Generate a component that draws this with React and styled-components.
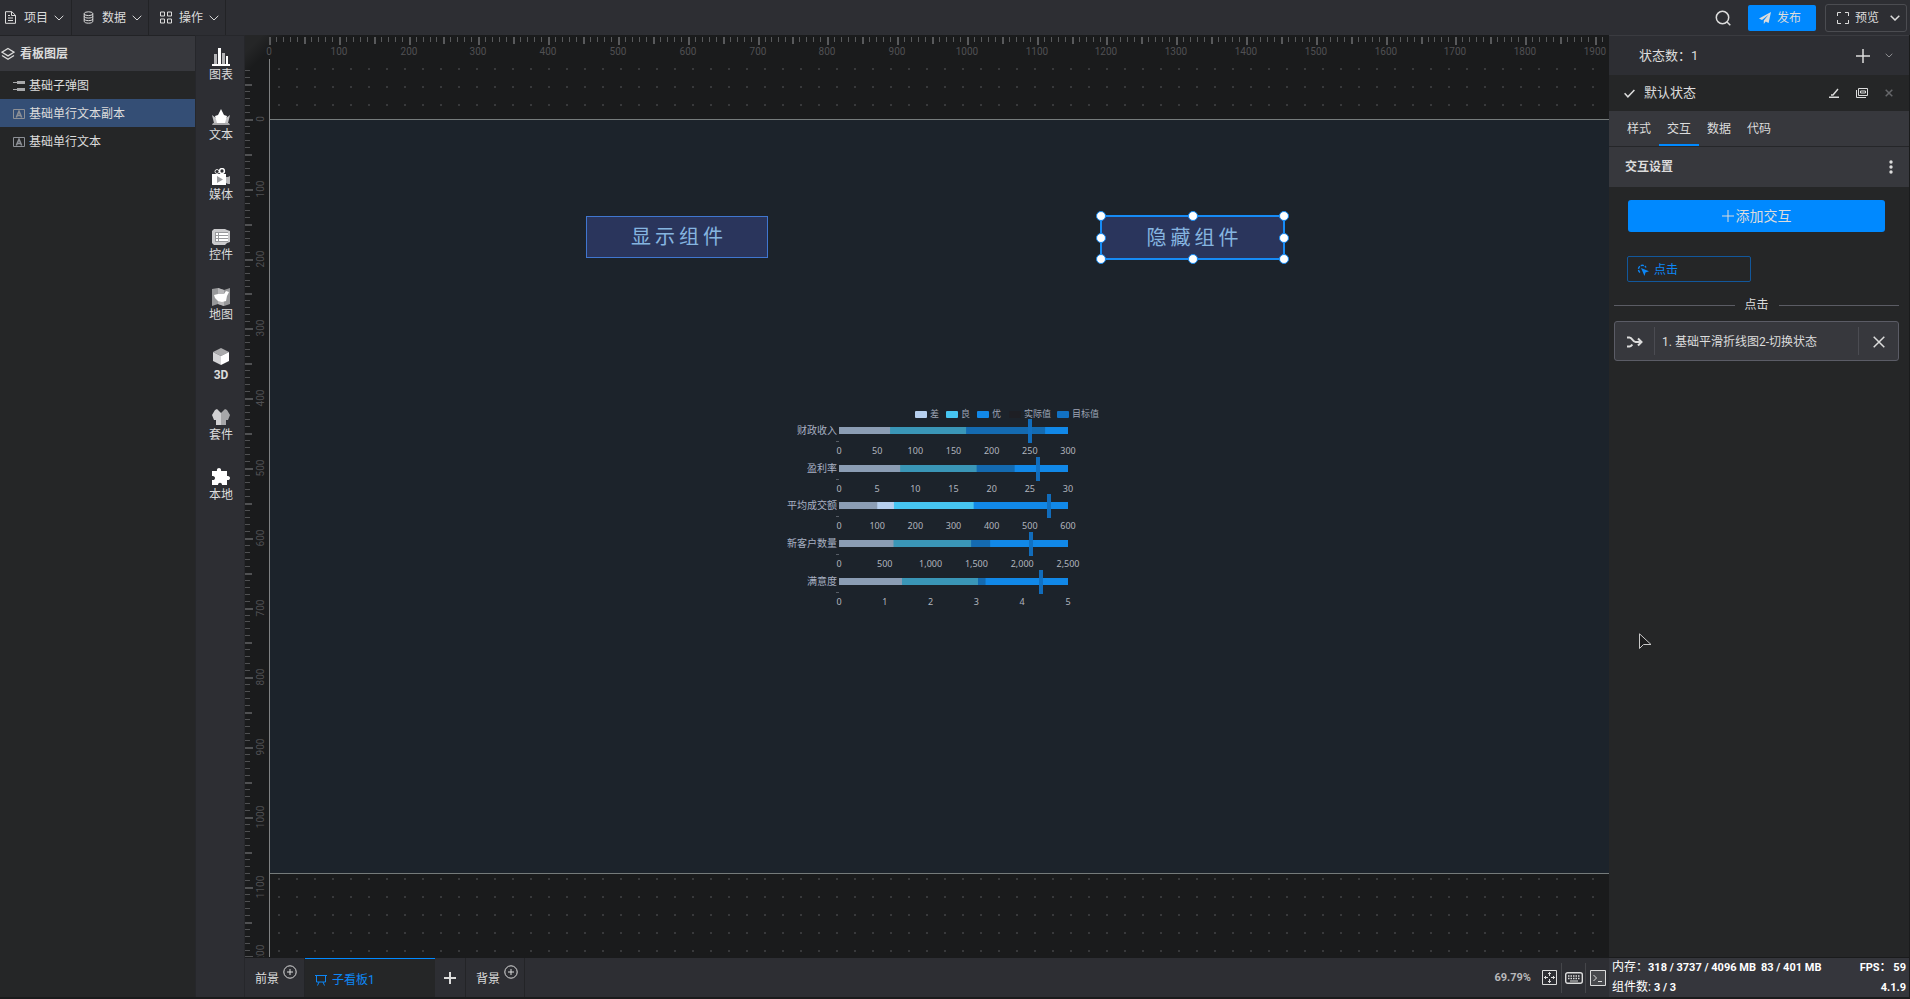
import React, { useLayoutEffect, useRef, useState } from "react";
import styled, { createGlobalStyle } from "styled-components";

const GlobalStyle = createGlobalStyle`
  * {
    box-sizing: border-box;
  }

  body {
    margin: 0;
    background: #1a1b1c;
    color: #dcdcdc;
    font: 12px/16px Roboto, "Noto Sans CJK SC", sans-serif;
  }

  button {
    padding: 0;
    border: 0;
    background: none;
    color: inherit;
    font: inherit;
    cursor: pointer;
  }

  svg {
    display: block;
    flex-shrink: 0;
  }
`;

const Page = styled.div`
  display: flex;
  flex-direction: column;
  height: 100vh;
  padding-bottom: 2px;
`;

const Body = styled.div`
  display: flex;
  flex: 1;
  min-height: 0;
`;

/* ---------- top bar ---------- */

const TopBar = styled.header`
  display: flex;
  align-items: center;
  height: 35px;
  padding-right: 3px;
  background: #2d2e33;
`;

const MenuButton = styled.button`
  display: flex;
  align-items: center;
  height: 35px;
  padding: 0 ${(props) => (props.$first ? 7 : 6)}px 0
    ${(props) => (props.$first ? 4 : 10)}px;
  border-right: 1px solid #222326;

  svg:last-child {
    margin-left: 6px;
  }
`;

const MenuLabel = styled.span`
  margin-left: 7px;
`;

const TopActions = styled.div`
  display: flex;
  align-items: center;
  margin-left: auto;
`;

const SearchButton = styled.button`
  margin-right: 17px;
`;

const PublishButton = styled.button`
  display: flex;
  align-items: center;
  justify-content: center;
  gap: 6px;
  width: 68px;
  height: 26px;
  margin-right: 9px;
  padding-right: 4px;
  border-radius: 2px;
  background: #0089ff;
`;

const PreviewButton = styled.button`
  display: flex;
  align-items: center;
  gap: 6px;
  width: 82px;
  height: 28px;
  padding: 0 6px 0 11px;
  border: 1px solid #4b4c51;
  border-radius: 3px;

  svg:last-child {
    margin-left: auto;
  }
`;

/* ---------- layers ---------- */

const LayerPanel = styled.aside`
  width: 195px;
  background: #252627;
`;

const LayerTitle = styled.h2`
  display: flex;
  align-items: center;
  gap: 5px;
  height: 36px;
  margin: 0;
  padding-left: 1px;
  border-top: 1px solid #222326;
  background: #37383d;
  font-size: 12px;
  font-weight: 700;
`;

const LayerList = styled.ul`
  margin: 0;
  padding: 0;
  list-style: none;
`;

const LayerButton = styled.button`
  display: flex;
  align-items: center;
  gap: 4px;
  width: 100%;
  height: 28px;
  padding: 2px 0 0 13px;
  background: ${(props) => (props.$selected ? "#344e75" : "none")};
`;

/* ---------- component rail ---------- */

const Rail = styled.nav`
  display: flex;
  flex-direction: column;
  align-items: center;
  width: 50px;
  padding: 12px 0 0 2px;
  border: 1px solid #26272b;
  border-bottom: 0;
  background: #2d2e33;
`;

const RailButton = styled.button`
  display: flex;
  flex-direction: column;
  align-items: center;
  gap: 1px;
  height: 60px;
  font-weight: ${(props) => (props.$bold ? 700 : 400)};
`;

/* ---------- workspace ---------- */

const Workspace = styled.main`
  display: flex;
  flex: 1;
  flex-direction: column;
  min-width: 0;
`;

const Stage = styled.div`
  display: grid;
  flex: 1;
  grid-template-rows: 24px minmax(0, 1fr);
  grid-template-columns: 24px minmax(0, 1fr);
  min-height: 0;
  background: linear-gradient(135deg, #252627 12px, #1a1b1c 28px);
`;

const RulerTop = styled.svg`
  grid-column: 1 / 3;
  width: 100%;
  height: 24px;
`;

const RulerLeft = styled.svg`
  width: 24px;
  height: 100%;
`;

const Desk = styled.div`
  display: flex;
  padding: 60px 0 83px;
  border-left: 1px solid #7f8182;
  background-image: conic-gradient(
    at 2px 2px,
    transparent 270deg,
    #38393b 270deg
  );
  background-position: 8px 9px;
  background-size: 18px 18px;
`;

const Artboard = styled.div`
  position: relative;
  flex: 1;
  border: solid #757b7b;
  border-width: 1px 0;
  background: #1c232b;
`;

const TextNode = styled.div`
  position: absolute;
  top: ${(props) => props.$y}px;
  left: ${(props) => props.$x}px;
  display: flex;
  align-items: center;
  justify-content: center;
  width: ${(props) => (props.$selected ? 185 : 182)}px;
  height: ${(props) => (props.$selected ? 45 : 42)}px;
  padding-left: 4px;
  border: ${(props) => (props.$selected ? "2px solid #168bf5" : "1px solid #4076cf")};
  background: #2a355c;
  color: #86b5e0;
  font-size: 20px;
  line-height: 28px;
  letter-spacing: 4px;
`;

const HandleFrame = styled.div`
  position: absolute;
  inset: -1px;
`;

const Handle = styled.i`
  position: absolute;
  top: ${(props) => props.$top};
  left: ${(props) => props.$left};
  width: 10px;
  height: 10px;
  margin: -5px;
  border: 1px solid #168bf5;
  border-radius: 50%;
  background: #fff;
`;

const ChartNode = styled.svg`
  position: absolute;
  top: 285px;
  left: 510px;
  font-family: "Noto Sans", "Noto Sans CJK SC", sans-serif;
`;

/* ---------- board tabs ---------- */

const BoardBar = styled.footer`
  display: flex;
  height: 40px;
  border-top: 1px solid #1a1b1c;
  background: #2d2e33;
`;

const BoardTab = styled.button`
  display: flex;
  align-items: center;
  gap: 4px;
  width: ${(props) => props.$width}px;
  padding: 3px 0 0 10px;
  border-right: 1px solid #232427;

  svg {
    align-self: flex-start;
    margin-top: 4px;
  }
`;

const ActiveBoardTab = styled.button`
  display: flex;
  align-items: center;
  gap: 5px;
  width: 130px;
  padding: 4px 0 0 10px;
  border-top: 1px solid #0089ff;
  background: #252627;
  color: #0d86f5;
`;

const AddBoard = styled.button`
  display: flex;
  align-items: center;
  justify-content: center;
  width: 31px;
  border-right: 1px solid #232427;
`;

const ViewTools = styled.div`
  display: flex;
  align-items: center;
  margin-left: auto;
`;

const Zoom = styled.span`
  margin-right: 6px;
  color: #b8b8ba;
  font-size: 11px;
  font-weight: 700;
`;

const ViewButton = styled.button`
  display: flex;
  align-items: center;
  justify-content: center;
  width: ${(props) => props.$width}px;
  height: 30px;
  border-right: ${(props) => (props.$last ? 0 : 1)}px solid #45464a;
`;

/* ---------- inspector ---------- */

const Inspector = styled.aside`
  position: relative;
  display: flex;
  flex-direction: column;
  width: 301px;
  border-right: 1px solid #1a1b1c;
  background: #252627;
`;

const StateHeader = styled.div`
  display: flex;
  align-items: center;
  height: 40px;
  padding: 0 16px 0 30px;
  border-top: 1px solid #3a3b40;
  background: #2d2e33;
  font-size: 13px;
`;

const StateRow = styled.div`
  display: flex;
  align-items: center;
  gap: 9px;
  height: 36px;
  padding: 0 16px 0 15px;
  font-size: 13px;
`;

const RowActions = styled.div`
  display: flex;
  align-items: center;
  gap: ${(props) => props.$gap}px;
  margin-left: auto;
`;

const Tabs = styled.div`
  display: flex;
  height: 36px;
  padding-left: 10px;
  border-bottom: 1px solid #252629;
  background: #37383d;
`;

const Tab = styled.button`
  width: 40px;
  border: solid transparent;
  border-width: 2px 0;
  border-bottom-color: ${(props) => (props.$active ? "#0089ff" : "transparent")};
`;

const SectionTitle = styled.h3`
  display: flex;
  align-items: center;
  justify-content: space-between;
  height: 40px;
  margin: 0;
  padding: 0 16px;
  background: #37383d;
  font-size: 12px;
  font-weight: 700;
`;

const AddButton = styled.button`
  display: flex;
  align-items: center;
  justify-content: center;
  gap: 2px;
  height: 32px;
  margin: 13px 24px 0 19px;
  border-radius: 3px;
  background: #0089ff;
  font-size: 14px;
`;

const EventButton = styled.button`
  display: flex;
  align-items: center;
  gap: 5px;
  width: 124px;
  height: 26px;
  margin: 24px 0 0 18px;
  padding: 2px 0 0 9px;
  border: 1px solid #12579b;
  border-radius: 2px;
  color: #0d86f5;
`;

const EventDivider = styled.div`
  display: flex;
  align-items: center;
  gap: 10px;
  margin: 15px 10px 0 5px;

  &::before,
  &::after {
    flex: 1;
    height: 1px;
    background: #5b5c64;
    content: "";
  }
`;

const ActionCard = styled.div`
  display: flex;
  align-items: center;
  height: 40px;
  margin: 8px 10px 0 5px;
  border: 1px solid #5b5c66;
  border-radius: 3px;
  background: #37383d;
`;

const ActionIcon = styled.span`
  display: flex;
  align-items: center;
  justify-content: center;
  width: 40px;
  height: 28px;
  padding-top: 2px;
  border-right: 1px solid #4b4c52;
`;

const ActionName = styled.span`
  flex: 1;
  padding: 2px 0 0 7px;
`;

const RemoveButton = styled.button`
  display: flex;
  align-items: center;
  justify-content: center;
  width: 40px;
  height: 28px;
  padding-top: 2px;
  border-left: 1px solid #4b4c52;
`;

const Stats = styled.div`
  display: flex;
  flex-direction: column;
  justify-content: space-between;
  height: 40px;
  margin-top: auto;
  padding: 0 3px 0;
  border-top: 1px solid #1a1b1c;
  background: #35363c;
  color: #fff;

  b {
    font-size: 11px;
  }
`;

const StatLine = styled.div`
  display: flex;
  line-height: 19px;

  b + b {
    margin-left: 5px;
  }

  b:last-child {
    margin-left: auto;
  }
`;

const Pointer = styled.svg`
  position: absolute;
  top: 598px;
  left: 30px;
`;

/* ---------- icons ---------- */

const Icon = ({ size = 12, w, h, children, ...rest }) => (
  <svg
    width={w || size}
    height={h || size}
    viewBox={`0 0 ${w || size} ${h || size}`}
    fill="none"
    stroke="currentColor"
    aria-hidden="true"
    {...rest}>
    {children}
  </svg>
);

const Chevron = ({ w = 10, h = 6, ...rest }) => (
  <Icon w={w} h={h} {...rest}>
    <path d={`M.7.8 L${w / 2} ${h - 1} L${w - 0.7} .8`} />
  </Icon>
);

const Plus = ({ size, width = 1 }) => (
  <Icon size={size} strokeWidth={width}>
    <path d={`M${size / 2} 0V${size}M0 ${size / 2}H${size}`} />
  </Icon>
);

const Cross = ({ size, ...rest }) => (
  <Icon size={size} {...rest}>
    <path d={`M.7.7L${size - 0.7} ${size - 0.7}M${size - 0.7}.7L.7 ${size - 0.7}`} />
  </Icon>
);

const PlusCircle = () => (
  <Icon size={14}>
    <circle cx="7" cy="7" r="6.2" />
    <path d="M7 4v6M4 7h6" />
  </Icon>
);

const TextIcon = () => (
  <Icon w={12} h={10} color="#8d9096">
    <path d="M.5.5h11v9H.5z" />
    <path d="M3.300 8.500L6 2.300l2.700 6.200M4.200 6.500h3.600" strokeWidth="1.600" />
  </Icon>
);

const BulletIcon = () => (
  <Icon w={12} h={12} stroke="none" fill="#a8a9ab">
    <path d="M0 2h4v1H0zM4 1h8v3H4zM0 9h4v1H0zM4 8h8v3H4z" />
  </Icon>
);

const menus = [
  {
    label: "项目",
    icon: (
      <Icon size={13}>
        <path d="M1.500.7h6.300l3.700 3.600v8H1.500zM7.500.7v3.800h4M4 4.500h2M4 7h5M4 9.500h5" />
      </Icon>
    ),
  },
  {
    label: "数据",
    icon: (
      <Icon size={13}>
        <ellipse cx="6.500" cy="2.700" rx="4.300" ry="1.900" />
        <path d="M2.200 2.700v7.600c0 2.500 8.600 2.500 8.600 0V2.700M2.200 5.300c0 2.300 8.600 2.300 8.600 0M2.200 7.900c0 2.300 8.600 2.300 8.600 0" />
      </Icon>
    ),
  },
  {
    label: "操作",
    icon: (
      <Icon size={13}>
        <path d="M1.500 1h4v4h-4zM8.500 1h4v4h-4zM1.500 8h4v4h-4zM8.500 8h4v4h-4z" />
      </Icon>
    ),
  },
];

const layers = [
  { name: "基础子弹图", icon: <BulletIcon /> },
  { name: "基础单行文本副本", icon: <TextIcon />, selected: true },
  { name: "基础单行文本", icon: <TextIcon /> },
];

const tools = [
  {
    label: "图表",
    icon: (
      <>
        <path fill="#b4b4b6" d="M2 6h3v10H2zM10 5h3v11h-3z" />
        <path d="M6 0h3v16H6zM14 8h2v8h-2zM0 16h18v2H0z" />
      </>
    ),
  },
  {
    label: "文本",
    icon: (
      <>
        <path fill="#c4c4c6" d="M0 7l4 3 2 5H2zM18 7l-4 3-2 5h4z" />
        <path d="M9 1l3 6 3 1-2 7H5L3 8l3-1z" />
        <path fill="#a6a6a8" d="M1 15h16l1 2H0z" />
      </>
    ),
  },
  {
    label: "媒体",
    icon: (
      <>
        <circle cx="5" cy="3.500" r="2" fill="none" stroke="#ddd" />
        <circle cx="10" cy="3" r="2.400" fill="none" stroke="#fff" strokeWidth="1.500" />
        <path fill="#b9b9bb" d="M14 9h2l2-1v8h-2l-2-1z" />
        <path d="M0 6h14v11H0z" />
        <path fill="#9c9da0" d="M5 8l6 3.500L5 15z" />
      </>
    ),
  },
  {
    label: "控件",
    icon: (
      <>
        <path fill="#cbcbcd" d="M2 1h11l2 1 3 1v11l-3 1-2 2H2l-2-2V3z" />
        <path fill="#999a9d" d="M3 4h13v10H3z" />
        <path d="M4 5h2v2H4zM7 5h9v2H7zM4 8h2v2H4zM7 8h9v2H7zM4 11h2v2H4zM7 11h9v2H7z" />
      </>
    ),
  },
  {
    label: "地图",
    icon: (
      <>
        <path fill="#97989a" d="M0 1l6-1 6 2 6-2v16l-6 2-6-2-6 2z" />
        <path fill="#b8b8ba" d="M6 0l6 2v16l-6-2z" />
        <path d="M2 7l4-1 6 0 2-3 3 1-2 4-1 5-4 1-4-1-3-3z" />
      </>
    ),
  },
  {
    label: "3D",
    bold: true,
    icon: (
      <>
        <path fill="#a9a9ab" d="M9 0l8 4-8 4-8-4z" />
        <path fill="#d4d4d6" d="M1 4l8 4v9l-8-4z" />
        <path d="M17 4L9 8v9l8-4z" />
      </>
    ),
  },
  {
    label: "套件",
    icon: (
      <>
        <path fill="#d0d0d2" d="M5 1l4 4v12H4v-5H2L0 7l3-5z" />
        <path fill="#a6a6a8" d="M13 1L9 5v12h5v-5h2l2-5-3-5z" />
      </>
    ),
  },
  {
    label: "本地",
    icon: (
      <path d="M0 3h5c-1-4 5-4 4 0h6v5c4-1 4 5 0 4v5h-5c0-3-4-3-4 0H0v-5c4 1 4-5 0-4z" />
    ),
  },
];

/* ---------- rulers ---------- */

const STEP = 6.979;
const range = (from, to) =>
  Array.from({ length: Math.max(0, to - from + 1) }, (_, i) => from + i);
const tickLength = (n) => (n % 10 === 0 ? 8 : n % 5 === 0 ? 7 : 5);

// draws only the ticks that fit the ruler's current size
const useLength = (side) => {
  const ref = useRef(null);
  const [length, setLength] = useState(0);
  useLayoutEffect(() => {
    const measure = () => setLength(ref.current.getBoundingClientRect()[side]);
    measure();
    window.addEventListener("resize", measure);
    return () => window.removeEventListener("resize", measure);
  }, [side]);
  return [ref, length];
};

const HorizontalRuler = () => {
  const [ref, length] = useLength("width");
  return (
    <RulerTop ref={ref} fontSize="10" fill="#505053" textAnchor="middle">
      {range(0, Math.floor((length - 24) / STEP)).map((n) => {
        const x = Math.round(24 + n * STEP);
        return (
          <g key={n}>
            <rect x={x} y="2" width={n % 5 === 0 ? 2 : 1} height={tickLength(n)} fill="#58595b" />
            {n % 10 === 0 && (
              <text x={x} y="20">
                {n * 10}
              </text>
            )}
          </g>
        );
      })}
    </RulerTop>
  );
};

const VerticalRuler = () => {
  const [ref, length] = useLength("height");
  return (
    <RulerLeft ref={ref} fontSize="10" fill="#505053" textAnchor="middle">
      {range(-7, Math.floor((length - 60) / STEP)).map((n) => {
        const y = Math.round(60 + n * STEP);
        return (
          <g key={n}>
            <rect y={y} width={tickLength(n)} height={n % 5 === 0 ? 2 : 1} fill="#505153" />
            {n % 10 === 0 && (
              <text transform={`translate(19 ${y}) rotate(-90)`}>{n * 10}</text>
            )}
          </g>
        );
      })}
    </RulerLeft>
  );
};

/* ---------- bullet chart ---------- */

const POOR = "#b6cfee";
const GOOD = "#46c5f1";
const BEST = "#1188e8";
const TARGET = "#1171c3";
const AXIS_X = 59;
const AXIS_W = 229;

const bullets = [
  { name: "财政收入", poor: 0.223, good: 0.555, actual: 0.9, target: 0.833, ticks: ["0", "50", "100", "150", "200", "250", "300"] },
  { name: "盈利率", poor: 0.267, good: 0.601, actual: 0.767, target: 0.867, ticks: ["0", "5", "10", "15", "20", "25", "30"] },
  { name: "平均成交额", poor: 0.24, good: 0.588, actual: 0.167, target: 0.917, ticks: ["0", "100", "200", "300", "400", "500", "600"] },
  { name: "新客户数量", poor: 0.238, good: 0.577, actual: 0.66, target: 0.84, ticks: ["0", "500", "1,000", "1,500", "2,000", "2,500"] },
  { name: "满意度", poor: 0.275, good: 0.607, actual: 0.64, target: 0.88, ticks: ["0", "1", "2", "3", "4", "5"] },
];

const legend = [
  { name: "差", color: POOR, x: 135 },
  { name: "良", color: GOOD, x: 166 },
  { name: "优", color: BEST, x: 197 },
  { name: "实际值", color: "#1e1f24", x: 229 },
  { name: "目标值", color: TARGET, x: 277 },
];

const BulletChart = () => (
  <ChartNode width="330" height="206">
    {legend.map((item) => (
      <g key={item.name}>
        <rect x={item.x} y="6" width="12" height="7" rx="1" fill={item.color} />
        <text x={item.x + 15} y="12" fontSize="9" fill="#9fa6b6">
          {item.name}
        </text>
      </g>
    ))}
    {bullets.map((row, i) => {
      const y = Math.round(22 + i * 37.7);
      return (
        <g key={row.name}>
          <text x="57" y={y + 7} fontSize="10" fill="#a8b1c3" textAnchor="end">
            {row.name}
          </text>
          <rect x={AXIS_X} y={y} width={AXIS_W} height="7" fill={BEST} />
          <rect x={AXIS_X} y={y} width={AXIS_W * row.good} height="7" fill={GOOD} />
          <rect x={AXIS_X} y={y} width={AXIS_W * row.poor} height="7" fill={POOR} />
          <rect x={AXIS_X} y={y} width={AXIS_W * row.actual} height="7" fill="#1e1e22" opacity="0.28" />
          <rect x={Math.round(AXIS_X + AXIS_W * row.target) - 2} y={y - 8} width="4" height="24" fill={TARGET} opacity="0.95" />
          <path d={`M56 ${y + 14.5}h3`} stroke="#575d66" />
          {row.ticks.map((tick, n) => (
            <text
              key={tick}
              x={AXIS_X + (AXIS_W * n) / (row.ticks.length - 1)}
              y={y + 27}
              fontSize="9"
              fill="#b1b5be"
              textAnchor="middle">
              {tick}
            </text>
          ))}
        </g>
      );
    })}
  </ChartNode>
);

const handles = [
  ["0%", "0%"],
  ["0%", "50%"],
  ["0%", "100%"],
  ["50%", "0%"],
  ["50%", "100%"],
  ["100%", "0%"],
  ["100%", "50%"],
  ["100%", "100%"],
];

const App = () => {
  return (
    <Page>
      <GlobalStyle />
      <TopBar>
        {menus.map((menu, i) => (
          <MenuButton key={menu.label} $first={i === 0}>
            {menu.icon}
            <MenuLabel>{menu.label}</MenuLabel>
            <Chevron />
          </MenuButton>
        ))}
        <TopActions>
          <SearchButton aria-label="搜索">
            <Icon size={16} strokeWidth="1.5">
              <circle cx="7.5" cy="7.5" r="6.2" />
              <path d="M12 12l3.300 3.300" />
            </Icon>
          </SearchButton>
          <PublishButton>
            <Icon size={12} stroke="none" fill="currentColor">
              <path d="M12 0L0 6.500l3 1.400L9.500 2.800 4.800 8.600V12l1.900-2.400 2.900 1.300z" />
            </Icon>
            发布
          </PublishButton>
          <PreviewButton>
            <Icon size={12}>
              <path d="M.5 4V.5H4M8 .5h3.500V4M11.500 8v3.500H8M4 11.500H.5V8" />
            </Icon>
            预览
            <Chevron strokeWidth="1.5" />
          </PreviewButton>
        </TopActions>
      </TopBar>

      <Body>
        <LayerPanel>
          <LayerTitle>
            <Icon size={14} strokeWidth="1.3">
              <path d="M7 1.500l6 3.700-6 3.700-6-3.700zM1 8.500l6 3.700 6-3.700" />
            </Icon>
            看板图层
          </LayerTitle>
          <LayerList>
            {layers.map((layer) => (
              <li key={layer.name}>
                <LayerButton $selected={layer.selected}>
                  {layer.icon}
                  {layer.name}
                </LayerButton>
              </li>
            ))}
          </LayerList>
        </LayerPanel>

        <Rail>
          {tools.map((tool) => (
            <RailButton key={tool.label} $bold={tool.bold}>
              <Icon size={18} stroke="none" fill="#fff">
                {tool.icon}
              </Icon>
              {tool.label}
            </RailButton>
          ))}
        </Rail>

        <Workspace>
          <Stage>
            <HorizontalRuler />
            <VerticalRuler />
            <Desk>
              <Artboard>
                <TextNode $x={316} $y={96}>
                  显示组件
                </TextNode>
                <TextNode $x={830} $y={95} $selected>
                  隐藏组件
                  <HandleFrame>
                    {handles.map(([top, left]) => (
                      <Handle key={top + left} $top={top} $left={left} />
                    ))}
                  </HandleFrame>
                </TextNode>
                <BulletChart />
              </Artboard>
            </Desk>
          </Stage>
          <BoardBar>
            <BoardTab $width={60}>
              前景
              <PlusCircle />
            </BoardTab>
            <ActiveBoardTab>
              <Icon size={12}>
                <path d="M0 1.500h12M1.500 1.500v6.500h9V1.500M4 8l-1.500 3.500M8 8l1.500 3.500" />
              </Icon>
              子看板1
            </ActiveBoardTab>
            <AddBoard aria-label="新建看板">
              <Plus size={12} width={2} />
            </AddBoard>
            <BoardTab $width={59}>
              背景
              <PlusCircle />
            </BoardTab>
            <ViewTools>
              <Zoom>69.79%</Zoom>
              <ViewButton $width={25} aria-label="适应画布">
                <Icon size={15}>
                  <path d="M.5.500h14v14H.5z" />
                  <path d="M7.500 2v4M7.500 9v4M2 7.500h4M9 7.500h4M6 3.500h3M6 11.500h3M3.500 6v3M11.500 6v3" />
                </Icon>
              </ViewButton>
              <ViewButton $width={24} aria-label="快捷键">
                <Icon w={18} h={12}>
                  <rect x=".7" y=".7" width="16.6" height="10.6" rx="2" strokeWidth="1.4" />
                  <path d="M3 4h12M3 6.500h12" strokeDasharray="1.5 1" strokeWidth="1.5" />
                  <path d="M5 9h8" />
                </Icon>
              </ViewButton>
              <ViewButton $width={23} $last aria-label="控制台">
                <Icon size={16}>
                  <path d="M.5.500h15v15H.5z" fill="#48494d" />
                  <path d="M3.500 5l3 3-3 3M8 11.500h4" />
                </Icon>
              </ViewButton>
            </ViewTools>
          </BoardBar>
        </Workspace>

        <Inspector>
          <StateHeader>
            状态数：1
            <RowActions $gap={15}>
              <button aria-label="添加状态">
                <Plus size={14} width={1.5} />
              </button>
              <button aria-label="展开">
                <Chevron w={8} h={5} color="#8f9093" />
              </button>
            </RowActions>
          </StateHeader>
          <StateRow>
            <Icon w={11} h={9} strokeWidth="1.5">
              <path d="M.6 4.300l3.300 3.500L10.400 1" />
            </Icon>
            默认状态
            <RowActions $gap={17}>
              <button aria-label="重命名">
                <Icon size={10} strokeWidth="1.4">
                  <path d="M0 9.300h10M2 7h2L9 1" />
                </Icon>
              </button>
              <button aria-label="复制">
                <Icon w={12} h={10}>
                  <path d="M2.500.5h9v7h-9zM.5 2v7.500H10M4.500 3h5M4.500 5h5M4.500 3v2M9.500 3v2" />
                </Icon>
              </button>
              <button aria-label="删除状态">
                <Cross size={8} color="#66676a" strokeWidth="1.5" />
              </button>
            </RowActions>
          </StateRow>
          <Tabs>
            <Tab>样式</Tab>
            <Tab $active>交互</Tab>
            <Tab>数据</Tab>
            <Tab>代码</Tab>
          </Tabs>
          <SectionTitle>
            交互设置
            <Icon w={4} h={14} stroke="none" fill="currentColor">
              <circle cx="2" cy="2" r="1.7" />
              <circle cx="2" cy="7" r="1.7" />
              <circle cx="2" cy="12" r="1.7" />
            </Icon>
          </SectionTitle>
          <AddButton>
            <Plus size={12} />
            添加交互
          </AddButton>
          <EventButton>
            <Icon size={12}>
              <path d="M3 8.500A4 4 0 1 1 9 3.500" strokeWidth="1.4" strokeDasharray="3 1" />
              <path d="M4 4l8 3.300-3.500 1.200L7.500 12z" fill="currentColor" stroke="none" />
            </Icon>
            点击
          </EventButton>
          <EventDivider>点击</EventDivider>
          <ActionCard>
            <ActionIcon>
              <Icon w={16} h={12} strokeWidth="2">
                <path d="M0 1.500h2.500c3 0 3 4.500 6 4.500H14M0 10.500h2.500c1.500 0 2-1 2.800-2M11 2.500L14.500 6 11 9.500" />
              </Icon>
            </ActionIcon>
            <ActionName>1. 基础平滑折线图2-切换状态</ActionName>
            <RemoveButton aria-label="移除">
              <Cross size={12} strokeWidth="1.5" />
            </RemoveButton>
          </ActionCard>
          <Stats>
            <StatLine>
              <span>内存：</span>
              <b>318 / 3737 / 4096 MB</b>
              <b>83 / 401 MB</b>
              <b>FPS： 59</b>
            </StatLine>
            <StatLine>
              <span>
                组件数: <b>3 / 3</b>
              </span>
              <b>4.1.9</b>
            </StatLine>
          </Stats>
          <Pointer width="14" height="18" fill="#1c1c1d" stroke="#c9c9c9">
            <path d="M.5.8V15.500L4.500 11.500H12z" />
          </Pointer>
        </Inspector>
      </Body>
    </Page>
  );
};

export default App;
